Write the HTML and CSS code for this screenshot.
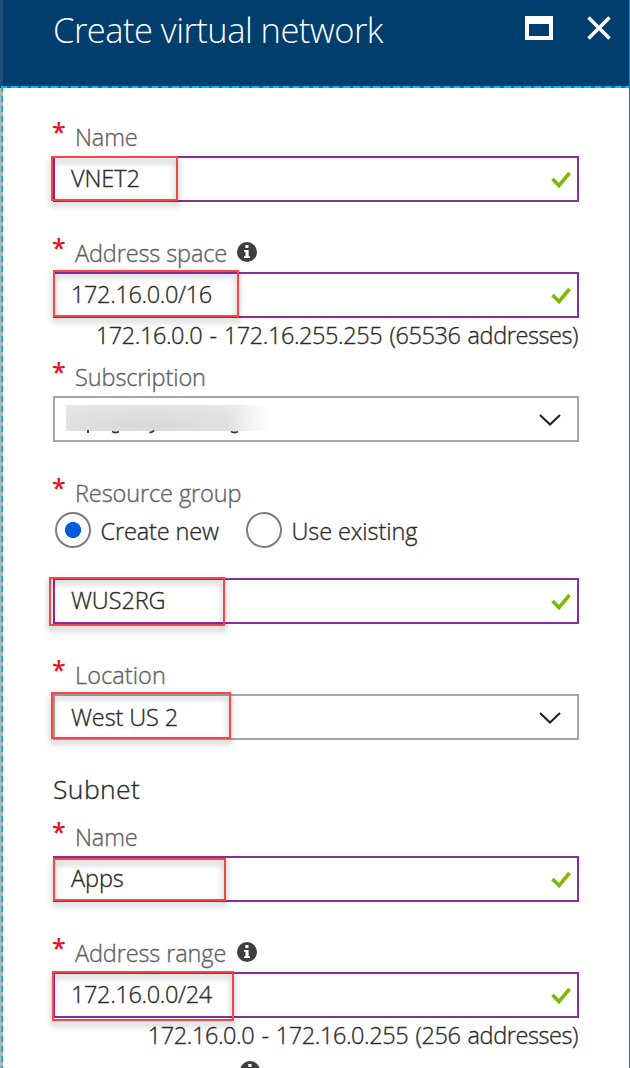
FILE: index.html
```html
<!DOCTYPE html>
<html lang="en">
<head>
<meta charset="utf-8">
<title>Create virtual network</title>
<link rel="stylesheet" href="styles.css">
</head>
<body>
<svg class="defs" width="0" height="0" aria-hidden="true">
  <symbol id="check" viewBox="0 0 20 18"><path d="M1.5 8 8 14.6 18.5 2" fill="none" stroke="#7fba00" stroke-width="3.6"/></symbol>
  <symbol id="chevron" viewBox="0 0 22 12"><path d="M1 1 11 10.5 21 1" fill="none" stroke="#222" stroke-width="2.1"/></symbol>
  <symbol id="info" viewBox="0 0 20 20"><circle cx="10" cy="10" r="10" fill="#3f3f3f"/><path d="M8.3 3h3.2v3H8.3zM7 8h4.6v6.2H13V16H7v-1.800h1.500V9.700H7z" fill="#fff"/></symbol>
</svg>
<div class="blade">
  <header class="header">
    <h1 class="title">Create virtual network</h1>
    <div class="actions">
      <svg width="28" height="24" viewBox="0 0 28 24"><path d="M0 0h28v24H0zM4 8v12h20V8z" fill="#fff" fill-rule="evenodd"/></svg>
      <svg width="24" height="24" viewBox="0 0 24 24"><path d="M1.500 1.500 22.500 22.500M22.500 1.500 1.500 22.500" stroke="#fff" stroke-width="3.500"/></svg>
    </div>
  </header>
  <main class="form">
    <section class="field">
      <div class="label"><span class="star">*</span><span>Name</span></div>
      <div class="input valid"><span>VNET2</span><svg class="check"><use href="#check"/></svg><i class="mark mark-name"></i></div>
    </section>
    <section class="field with-hint">
      <div class="label"><span class="star">*</span><span class="long">Address space</span><svg class="info"><use href="#info"/></svg></div>
      <div class="input valid"><span class="ip">172.16.0.0/16</span><svg class="check"><use href="#check"/></svg><i class="mark mark-space"></i></div>
      <div class="hint">172.16.0.0 - 172.16.255.255 (65536 addresses)</div>
    </section>
    <section class="field">
      <div class="label"><span class="star">*</span><span>Subscription</span></div>
      <div class="input"><div class="redacted"><svg width="202" height="29" viewBox="0 0 202 29"><path d="M22 25v3M46 26.500q3.500 2 7 0M83.500 27.500q3 0 4.500-2M165 26.500q3.500 2 7 0" fill="none" stroke="#333" stroke-width="1.800"/></svg></div><svg class="chevron"><use href="#chevron"/></svg></div>
    </section>
    <section class="field">
      <div class="label"><span class="star">*</span><span>Resource group</span></div>
      <div class="radios">
        <span class="radio on"></span><span class="choice create">Create new</span>
        <span class="radio"></span><span class="choice">Use existing</span>
      </div>
      <div class="input valid"><span>WUS2RG</span><svg class="check"><use href="#check"/></svg><i class="mark mark-group"></i></div>
    </section>
    <section class="field location">
      <div class="label"><span class="star">*</span><span class="loose">Location</span></div>
      <div class="input"><span class="region">West US 2</span><svg class="chevron"><use href="#chevron"/></svg><i class="mark mark-location"></i></div>
    </section>
    <h2 class="subtitle">Subnet</h2>
    <section class="field">
      <div class="label"><span class="star">*</span><span>Name</span></div>
      <div class="input valid"><span>Apps</span><svg class="check"><use href="#check"/></svg><i class="mark mark-subnet"></i></div>
    </section>
    <section class="field with-hint">
      <div class="label"><span class="star">*</span><span class="long">Address range</span><svg class="info"><use href="#info"/></svg></div>
      <div class="input valid"><span class="ip">172.16.0.0/24</span><svg class="check"><use href="#check"/></svg><i class="mark mark-range"></i></div>
      <div class="hint">172.16.0.0 - 172.16.0.255 (256 addresses)</div>
    </section>
    <svg class="info next"><use href="#info"/></svg>
  </main>
</div>
</body>
</html>
```
FILE: styles.css
```css
* { box-sizing: border-box; }
body {
  margin: 0;
  font: 300 23.5px/32px "Open Sans", "Noto Sans", sans-serif;
  letter-spacing: -0.1px;
  color: #2b2b2b;
  -webkit-text-stroke: 0.35px currentColor;
}
.defs { position: absolute; }
.blade {
  position: relative;
  height: 1068px;
  overflow: hidden;
  background: #fff;
  border-right: 1px solid #2472b4;
}
.header {
  display: flex;
  justify-content: space-between;
  height: 88px;
  padding: 6px 19px 0 53px;
  background:
    repeating-linear-gradient(90deg, #00bcf2 0 6.500px, #0072ad 6.500px 10.060px) 1px 86px / 100% 2px no-repeat,
    linear-gradient(#1f4f7c, #1f4f7c) 0 0 / 3px 86px no-repeat,
    #003e6e;
}
.title {
  margin: 0;
  font-size: 34.5px;
  font-weight: 300;
  line-height: 47px;
  letter-spacing: -0.53px;
  color: #fff;
  -webkit-text-stroke: 0;
}
.actions { display: flex; gap: 35px; padding-top: 10px; }
.actions svg { margin-right: -1px; }
.form {
  display: flow-root;
  height: 980px;
  padding: 33px 50px 0 53px;
  background:
    repeating-linear-gradient(180deg, #00bcf2 0 6px, #b5b5b5 6px 10px) 1px -2px / 2px 990px no-repeat,
    linear-gradient(#b5b5b5, #b5b5b5) 0 0 / 3px 100% no-repeat;
}
.field { margin-bottom: 35px; }
.with-hint { margin-bottom: 10px; }
.label {
  display: flex;
  height: 35px;
  color: #616161;
}
.star {
  width: 22px;
  margin: -6px 1px 0 -1px;
  font-size: 25px;
  font-weight: 600;
  letter-spacing: 0;
  line-height: 32px;
  color: #e81123;
  -webkit-text-stroke: 0;
}
.long { width: 152px; letter-spacing: -0.12px; white-space: nowrap; }
.loose { letter-spacing: 0.08px; }
.info { display: block; width: 20px; height: 20px; margin: 5px 0 0 10px; }
.input {
  position: relative;
  display: flex;
  align-items: center;
  justify-content: space-between;
  height: 46px;
  padding: 0 6px 2px 16px;
  border: 2px solid #a6a6a6;
}
.valid { border-color: #8a2da5; }
.check { width: 20px; height: 18px; margin-top: 3px; }
.chevron { width: 22px; height: 12px; margin: 4px 10px 0 0; }
.ip { letter-spacing: -0.36px; }
.region { padding-top: 2px; }
.hint {
  padding: 1px 1px 0 0;
  text-align: right;
  white-space: nowrap;
  letter-spacing: -0.42px;
  word-spacing: 1.5px;
}
.redacted {
  width: 202px;
  height: 26px;
  margin: 0 0 0 -5px;
  background:
    linear-gradient(90deg, transparent 80%, #fff 100%),
    radial-gradient(ellipse at 40% 75%, #d8d8d8, #e2e2e2 55%, #e9e9e9);
}
.redacted svg { display: block; }
.radios {
  display: flex;
  align-items: center;
  height: 36px;
  margin: 0 0 30px 2px;
}
.radio {
  width: 36px;
  height: 36px;
  border: 2px solid #7d7d7d;
  border-radius: 50%;
}
.on { background: radial-gradient(circle, #015cda 7.700px, #fff 8.300px); }
.choice { padding: 2px 0 0 9.5px; }
.create { width: 155px; letter-spacing: -0.15px; }
.location { margin-bottom: 31px; }
.subtitle {
  margin: 0 0 14px;
  font-size: 26.5px;
  font-weight: 300;
  line-height: 36px;
  letter-spacing: 0.4px;
}
.next { margin: 5px 0 0 187px; }
.mark {
  position: absolute;
  border: 2px solid #fb4444;
  filter: drop-shadow(0 4px 3px rgba(0, 0, 0, 0.4));
}
/* Callout offsets are relative to the inside edge of each input. */
.mark-name { left: -4px; top: -2px; width: 127px; height: 45px; }
.mark-space { left: -2px; top: -4px; width: 186px; height: 47px; }
.mark-group { left: -6px; top: -3px; width: 176px; height: 49px; }
.mark-location { left: -4px; top: -4px; width: 180px; height: 47px; }
.mark-subnet { left: -2px; top: 0; width: 173px; height: 43px; }
.mark-range { left: -3px; top: -3px; width: 182px; height: 50px; }
```
